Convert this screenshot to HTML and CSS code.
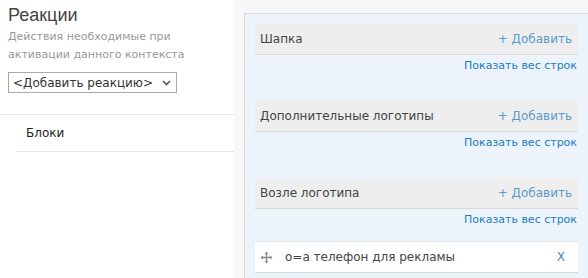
FILE: index.html
```html
<!DOCTYPE html>
<html>
<head>
<meta charset="utf-8">
<link rel="stylesheet" href="styles.css">
</head>
<body>
<div class="page">
  <aside class="sidebar">
    <div class="intro">
      <h1 class="title">Реакции</h1>
      <p class="desc">Действия необходимые при активации данного контекста</p>
      <div class="select-wrap">
        <select class="select"><option>&lt;Добавить реакцию&gt;</option></select>
        <svg class="chev" width="9" height="6" viewBox="0 0 9 6"><path d="M1 1 L4.5 4.5 L8 1" fill="none" stroke="#555" stroke-width="1.6"/></svg>
      </div>
    </div>
    <ul class="menu">
      <li class="menu-item">Блоки</li>
    </ul>
  </aside>
  <main class="main">
    <div class="panel">
      <section class="group">
        <div class="group-head"><span class="group-name">Шапка</span><a class="add">+ Добавить</a></div>
        <div class="show-all"><a>Показать вес строк</a></div>
      </section>
      <section class="group">
        <div class="group-head"><span class="group-name">Дополнительные логотипы</span><a class="add">+ Добавить</a></div>
        <div class="show-all"><a>Показать вес строк</a></div>
      </section>
      <section class="group">
        <div class="group-head"><span class="group-name">Возле логотипа</span><a class="add">+ Добавить</a></div>
        <div class="show-all"><a>Показать вес строк</a></div>
      </section>
      <div class="item">
        <svg class="move" width="13" height="13" viewBox="0 0 13 13">
          <path d="M6.5 0.5 L4.5 2.8 L8.5 2.8 Z M6.5 12.5 L4.5 10.2 L8.5 10.2 Z M0.5 6.5 L2.8 4.5 L2.8 8.5 Z M12.5 6.5 L10.2 4.5 L10.2 8.5 Z" fill="#888"/>
          <path d="M6.5 2 V11 M2 6.5 H11" stroke="#888" stroke-width="1.4"/>
        </svg>
        <span class="item-text">о=а телефон для рекламы</span>
        <a class="remove">X</a>
      </div>
    </div>
  </main>
</div>
</body>
</html>
```
FILE: styles.css
```css
html, body {
  margin: 0;
  padding: 0;
  height: 100%;
}
body {
  font-family: "DejaVu Sans", Verdana, sans-serif;
  background: #f7f7f7;
  overflow: hidden;
}
.page {
  display: flex;
  height: 278px;
}
.sidebar {
  width: 234px;
  flex: none;
  background: #fff;
}
.intro {
  padding: 4px 8px 0 8px;
}
.title {
  margin: 0;
  font-family: "Liberation Sans", Arial, sans-serif;
  font-weight: normal;
  font-size: 18px;
  line-height: 22px;
  color: #444;
}
.desc {
  margin: 2px 0 0 0;
  font-size: 11px;
  line-height: 18px;
  color: #999;
}
.select-wrap {
  position: relative;
  width: 169px;
  margin-top: 8px;
}
.select {
  -webkit-appearance: none;
  appearance: none;
  display: block;
  width: 169px;
  height: 21px;
  margin: 0;
  padding: 0 0 0 4px;
  border: 1px solid #a9a9a9;
  border-radius: 0;
  background: #fff;
  font-family: "DejaVu Sans", Verdana, sans-serif;
  font-size: 12px;
  color: #333;
}
.chev {
  position: absolute;
  right: 6px;
  top: 8px;
}
.menu {
  list-style: none;
  margin: 21px 0 0 0;
  padding: 0 0 0 16px;
  border-top: 1px solid #e6e6e6;
}
.menu-item {
  height: 36px;
  line-height: 36px;
  padding-left: 10px;
  border-bottom: 1px solid #e6e6e6;
  font-size: 12px;
  color: #222;
}
.main {
  flex: 1;
  padding: 13px 0 0 10px;
  min-width: 0;
}
.panel {
  background: #edf3fa;
  border: 1px solid #dcdcdc;
  border-right: none;
  border-bottom: none;
  padding: 10px 10px 0 10px;
  height: 100%;
}
.group {
  margin-bottom: 24px;
}
.group:last-of-type {
  margin-bottom: 10px;
}
.group-head {
  display: flex;
  justify-content: space-between;
  align-items: center;
  height: 30px;
  padding: 0 6px 0 5px;
  background: #eeeeee;
  border-bottom: 1px solid #d9d9d9;
  font-size: 12px;
}
.group-name {
  color: #444;
}
.add {
  color: #5b9acb;
}
.show-all {
  text-align: right;
  height: 22px;
  line-height: 22px;
  padding-right: 1px;
  font-size: 11px;
  color: #1a7cc2;
}
.item {
  display: flex;
  align-items: center;
  height: 30px;
  background: #fff;
  border-top: 1px solid #e3e9ef;
  border-bottom: 1px solid #d9d9d9;
  padding: 0 13px 0 5px;
  font-size: 12px;
}
.move {
  flex: none;
}
.item-text {
  margin-left: 12px;
  flex: 1;
  color: #444;
}
.remove {
  color: #4a8cc6;
}
```
